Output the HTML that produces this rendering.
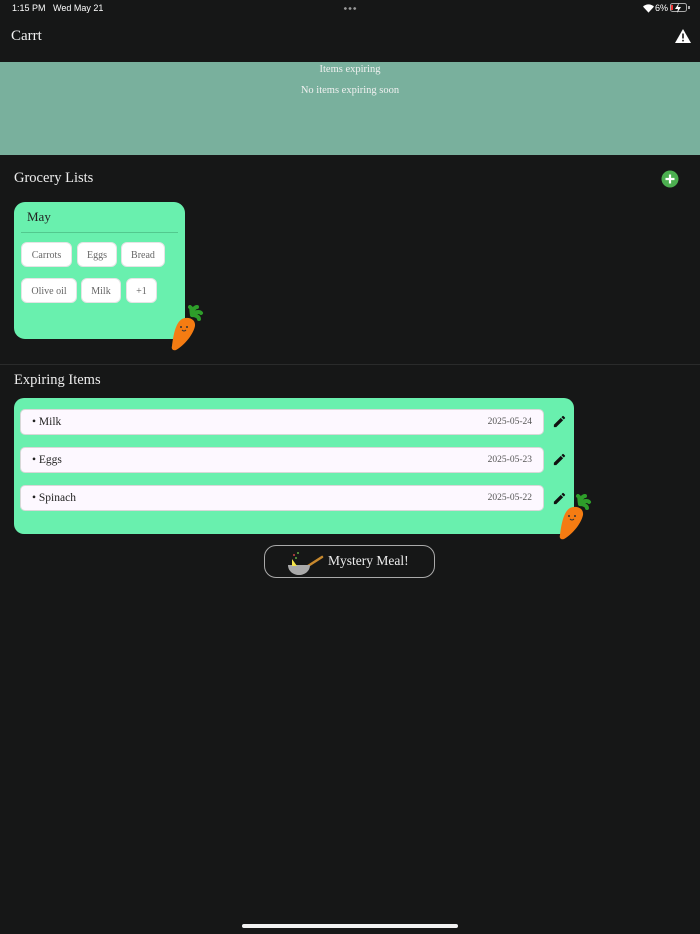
<!DOCTYPE html>
<html><head><meta charset="utf-8"><style>
*{margin:0;padding:0;box-sizing:border-box}
body{width:700px;height:934px;background:#161717;font-family:"Liberation Serif",serif;color:#eee;position:relative;overflow:hidden}
.abs{position:absolute}
.status{font-family:"Liberation Sans",sans-serif;font-size:9px;color:#fff}
.chip{position:absolute;background:#fff;border-radius:6px;color:#666;font-size:10px;text-align:center;line-height:25px;height:25px;border:1px solid #e4e4e4}
.row{position:absolute;left:20px;width:524px;height:26px;background:#fdf8ff;border-radius:5px;border:1px solid #d8d8d8;font-size:11.5px;color:#222}
.row .n{position:absolute;left:11px;top:6px}
.row .d{position:absolute;right:11px;top:7px;font-size:9.5px;color:#555}
.pen{position:absolute;left:552px}
</style></head><body>
<div class="abs status" style="left:12px;top:3px">1:15 PM&nbsp;&nbsp; Wed May 21</div>
<div class="abs" style="left:343px;top:7px;width:14px;height:3px;background:radial-gradient(circle,#999 1.2px,transparent 1.5px) 0 0/4.7px 3px repeat-x"></div>
<svg class="abs" style="left:643px;top:4px" width="11" height="9" viewBox="0 0 12 9"><path d="M6 9L0 2.5A8.5 8.5 0 0 1 12 2.5Z" fill="#fff"/></svg>
<div class="abs status" style="left:655px;top:3px">6%</div>
<div class="abs" style="left:670px;top:3px;width:17px;height:9px;border:1px solid #aaa;border-radius:2.5px"></div>
<div class="abs" style="left:671px;top:5px;width:2px;height:5px;background:#e33"></div>
<svg class="abs" style="left:674px;top:3px" width="9" height="10" viewBox="0 0 9 10"><path d="M5 0L1 6h3l-1 4 4-6H4z" fill="#fff"/></svg>
<div class="abs" style="left:688px;top:6px;width:1.5px;height:3px;background:#aaa"></div>
<div class="abs" style="left:11px;top:28px;font-size:15px;color:#f2f2f2">Carrt</div>
<svg class="abs" style="left:675px;top:29px" width="16" height="14" viewBox="0 0 16 14"><path d="M8 0L16 14H0Z" fill="#fff"/><rect x="7.2" y="4.5" width="1.6" height="5" fill="#161717"/><rect x="7.2" y="10.8" width="1.6" height="1.6" fill="#161717"/></svg>
<div class="abs" style="left:0;top:62px;width:700px;height:93px;background:#79b09d"></div>
<div class="abs" style="left:0;top:64px;width:700px;text-align:center;font-size:10.5px;color:#f0f0f0">Items expiring</div>
<div class="abs" style="left:0;top:85px;width:700px;text-align:center;font-size:10.5px;color:#f0f0f0">No items expiring soon</div>
<div class="abs" style="left:14px;top:170px;font-size:14.5px;color:#eee">Grocery Lists</div>
<svg class="abs" style="left:661px;top:170px" width="18" height="18" viewBox="0 0 18 18"><circle cx="9" cy="9" r="8.5" fill="#4caf50"/><path d="M9 4.5v9M4.5 9h9" stroke="#fff" stroke-width="2.2"/></svg>
<div class="abs" style="left:14px;top:202px;width:171px;height:137px;background:#69f0ae;border-radius:11px"></div>
<div class="abs" style="left:27px;top:209px;font-size:13px;color:#222">May</div>
<div class="abs" style="left:21px;top:232px;width:157px;height:1px;background:#52c98e"></div>
<div class="chip" style="left:21px;top:242px;width:51px">Carrots</div>
<div class="chip" style="left:77px;top:242px;width:40px">Eggs</div>
<div class="chip" style="left:121px;top:242px;width:44px">Bread</div>
<div class="chip" style="left:21px;top:278px;width:56px">Olive oil</div>
<div class="chip" style="left:81px;top:278px;width:40px">Milk</div>
<div class="chip" style="left:126px;top:278px;width:31px">+1</div>
<svg class="abs" style="left:168px;top:305px" width="36" height="48" viewBox="0 0 36 48">
<path d="M24 10c0-5 3-8 5-8M24 10c3-3 7-4 9-2M24 10c4 0 7 2 7 4M24 10c-1-4 0-7 -2-8" stroke="#2e9e2a" stroke-width="4" stroke-linecap="round" fill="none"/>
<path d="M14 14c6-3 14 0 13 7C25 31 14 42 8 45c-3 1-5-1-4-4C5 33 7 18 14 14z" fill="#f57c12"/>
<circle cx="13" cy="22" r="1" fill="#333"/><circle cx="19" cy="22" r="1" fill="#333"/><path d="M14 25q2 2 4 0" stroke="#333" fill="none"/></svg>
<div class="abs" style="left:0;top:364px;width:700px;height:1px;background:#2a2b2b"></div>
<div class="abs" style="left:14px;top:372px;font-size:14.5px;color:#eee">Expiring Items</div>
<div class="abs" style="left:14px;top:398px;width:560px;height:136px;background:#69f0ae;border-radius:10px"></div>
<div class="row" style="top:409px"><span class="n">• Milk</span><span class="d">2025-05-24</span></div>
<div class="row" style="top:447px"><span class="n">• Eggs</span><span class="d">2025-05-23</span></div>
<div class="row" style="top:485px"><span class="n">• Spinach</span><span class="d">2025-05-22</span></div>
<svg class="pen" style="top:414px" width="15" height="15" viewBox="0 0 24 24"><path d="M3 17.25V21h3.75L17.8 9.94l-3.75-3.75L3 17.25zM20.7 7.04a1 1 0 0 0 0-1.41l-2.34-2.34a1 1 0 0 0-1.41 0l-1.83 1.83 3.75 3.75 1.83-1.83z" fill="#111"/></svg>
<svg class="pen" style="top:452px" width="15" height="15" viewBox="0 0 24 24"><path d="M3 17.25V21h3.75L17.8 9.94l-3.75-3.75L3 17.25zM20.7 7.04a1 1 0 0 0 0-1.41l-2.34-2.34a1 1 0 0 0-1.41 0l-1.83 1.83 3.75 3.75 1.83-1.83z" fill="#111"/></svg>
<svg class="pen" style="top:491px" width="15" height="15" viewBox="0 0 24 24"><path d="M3 17.25V21h3.75L17.8 9.94l-3.75-3.75L3 17.25zM20.7 7.04a1 1 0 0 0 0-1.41l-2.34-2.34a1 1 0 0 0-1.41 0l-1.83 1.83 3.75 3.75 1.83-1.83z" fill="#111"/></svg>
<svg class="abs" style="left:556px;top:494px" width="36" height="48" viewBox="0 0 36 48">
<path d="M24 10c0-5 3-8 5-8M24 10c3-3 7-4 9-2M24 10c4 0 7 2 7 4M24 10c-1-4 0-7 -2-8" stroke="#2e9e2a" stroke-width="4" stroke-linecap="round" fill="none"/>
<path d="M14 14c6-3 14 0 13 7C25 31 14 42 8 45c-3 1-5-1-4-4C5 33 7 18 14 14z" fill="#f57c12"/>
<circle cx="13" cy="22" r="1" fill="#333"/><circle cx="19" cy="22" r="1" fill="#333"/><path d="M14 25q2 2 4 0" stroke="#333" fill="none"/></svg>
<div class="abs" style="left:264px;top:545px;width:171px;height:33px;border:1px solid #aaa;border-radius:12px"></div>
<svg class="abs" style="left:286px;top:547px" width="38" height="30" viewBox="0 0 38 30">
<circle cx="8" cy="8" r="1" fill="#c44"/><circle cx="12" cy="6" r="1" fill="#6a4"/><circle cx="10" cy="11" r="1" fill="#6a4"/>
<path d="M22 19L36 10" stroke="#c8892e" stroke-width="2.5" stroke-linecap="round"/>
<path d="M2 18h22c0 6-5 10-11 10S2 24 2 18z" fill="#aaa"/><path d="M6 12v7h5z" fill="#f5e44a"/></svg>
<div class="abs" style="left:328px;top:553px;font-size:13.5px;color:#eee">Mystery Meal!</div>
<div class="abs" style="left:242px;top:924px;width:216px;height:4px;border-radius:2px;background:#f2f2f2"></div>
</body></html>
